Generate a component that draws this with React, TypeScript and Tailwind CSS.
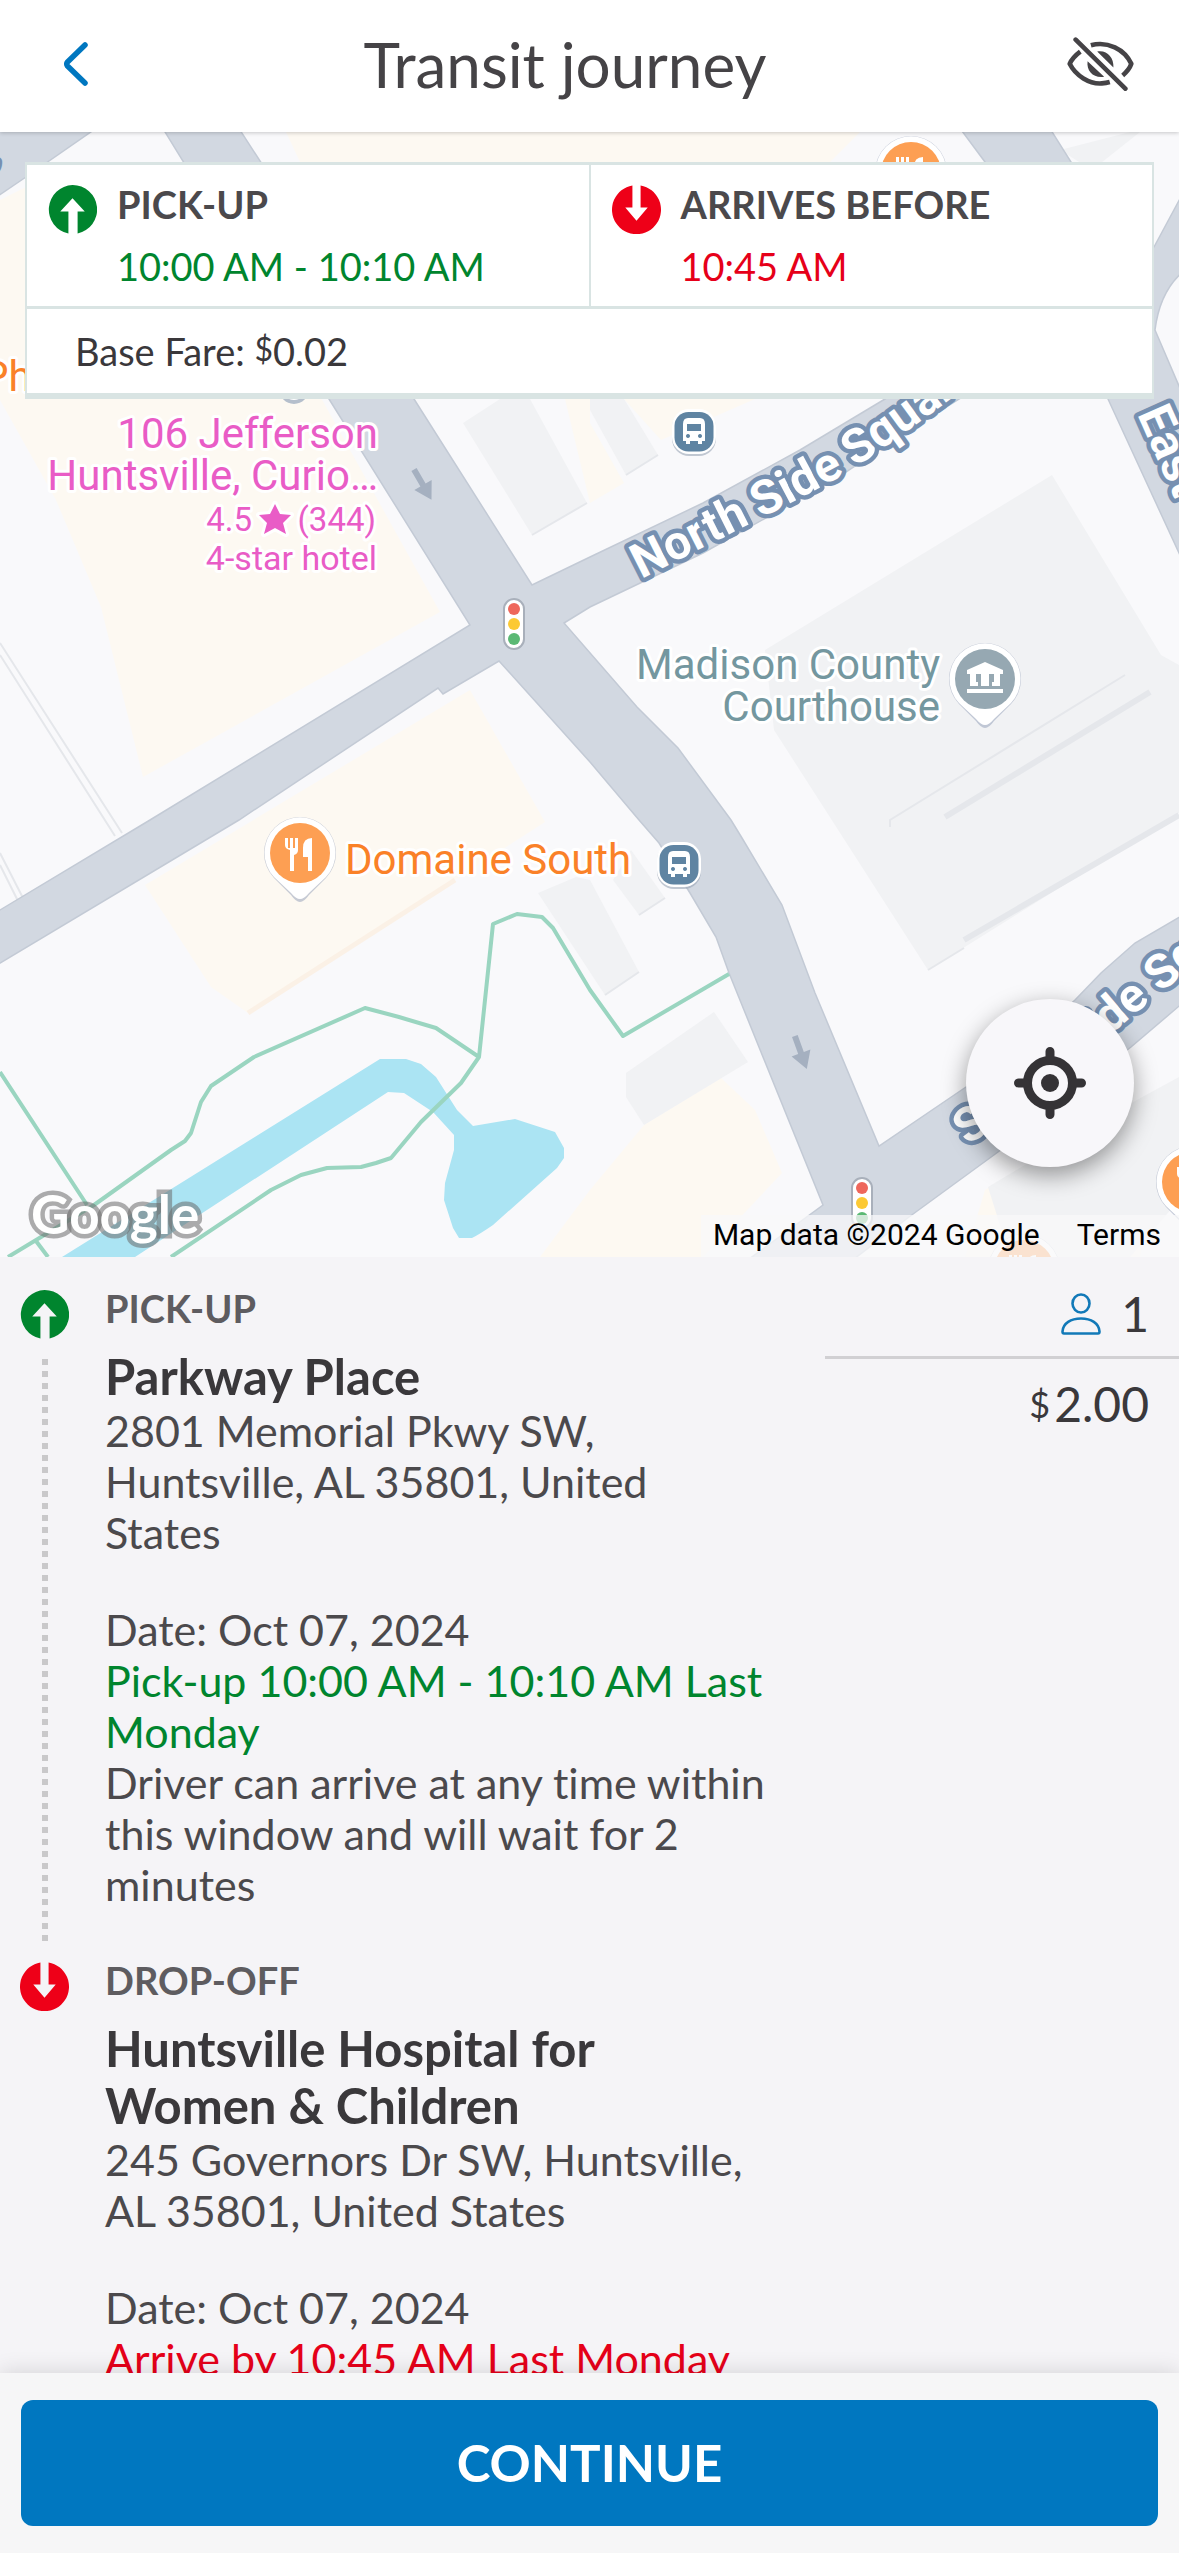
import type { ReactNode } from "react";

type Direction = "up" | "down";

function StopIcon({ direction }: { direction: Direction }) {
  return direction === "up" ? (
    <svg viewBox="0 0 48 48" className="size-[49px] shrink-0" aria-hidden="true">
      <path fill="#00852e" d="M24 0a24 24 0 0 1 5 47.5V26h7L24 13 12 26h8v21.5A24 24 0 0 1 24 0Z" />
    </svg>
  ) : (
    <svg viewBox="0 0 48 48" className="size-[49px] shrink-0" aria-hidden="true">
      <path fill="#ee0018" d="M28 .5a24 24 0 1 1-8 0V22h-7l11 13 11-13h-7Z" />
    </svg>
  );
}

function Bus({ x, y }: { x: number; y: number }) {
  return (
    <g transform={`translate(${x} ${y})`}>
      <rect x="-22" y="-22" width="44" height="46" rx="17" fill="#9aa5b5" opacity=".6" />
      <rect x="-22" y="-23" width="44" height="45" rx="17" fill="#fff" />
      <rect x="-19.500" y="-20" width="39" height="39.500" rx="14" fill="#5f84a2" />
      <path
        fill="#fff"
        fillRule="evenodd"
        d="M-6-14H6Q11-14 11-8V9H8v3H4V9H-4v3H-8V9H-11V-8Q-11-14-6-14ZM-7-8V-1H7V-8ZM-6 2a2 2 0 1 0 .01 0ZM6 2a2 2 0 1 0 .01 0Z"
      />
    </g>
  );
}

function Pin({ x, y, color, children }: { x: number; y: number; color: string; children?: ReactNode }) {
  return (
    <g transform={`translate(${x} ${y})`}>
      <path
        d="M0 49Q-4 49-9 42L-26 25A36 36 0 1 1 26 25L9 42Q4 49 0 49Z"
        fill="#8f9bb5"
        opacity=".5"
      />
      <path d="M0 46Q-4 46-9 40L-26 24A35.500 35.500 0 1 1 26 24L9 40Q4 46 0 46Z" fill="#fff" />
      <circle r="30" fill={color} />
      {children}
    </g>
  );
}

function Cutlery() {
  return (
    <path
      fill="#fff"
      d="M-15-15h3v10h2v-10h3v10h2v-10h3v12q0 4-4 5v16h-4V-3q-5-1-5-5ZM12-15v33H8V4H3V-5Q3-15 12-15Z"
    />
  );
}

function TrafficLight({ x, y }: { x: number; y: number }) {
  return (
    <g transform={`translate(${x} ${y})`}>
      <rect x="-10" y="-25" width="20" height="50" rx="10" fill="#fff" stroke="#a9b0bb" strokeWidth="2" />
      <circle cy="-15" r="6" fill="#ee675c" />
      <circle r="6" fill="#fcc934" />
      <circle cy="15" r="6" fill="#5bb974" />
    </g>
  );
}

function OneWayArrow({ x, y, angle }: { x: number; y: number; angle: number }) {
  return (
    <path
      transform={`translate(${x} ${y}) rotate(${angle})`}
      d="M-3-18H3V0H10L0 17-10 0H-3Z"
      fill="#a5b0c0"
    />
  );
}

function CityMap() {
  return (
    <svg
      viewBox="0 132 1179 1125"
      preserveAspectRatio="xMidYMid slice"
      className="block h-[1125px] w-full bg-[#f9f9fb]"
      role="img"
      aria-label="Map of downtown Huntsville"
    >
      {/* commercial blocks */}
      <g fill="#fdf9f2">
        <path d="M0 200 40 180H200L440 612 143 777 101 607 56 500 0 400Z" />
        <path d="M286 132H860L830 162H300Z" />
        <path d="M470 690 545 822 248 1013 211 987 145 885Z" />
        <path d="M721 1078 755 1110 782 1173 703 1257H540L590 1190 644 1125Z" />
        <path d="M590 423 624 483 590 503 565 399H590ZM624 399H755L661 440Z" />
        <path d="M1130 1100 1160 1160 1140 1257H965L985 1190Z" />
      </g>
      <path d="M248 1013 455 880" stroke="#fbf1e6" strokeWidth="5" />

      {/* buildings */}
      <g fill="#f1f2f4">
        <path d="M463 423 500 399H530L587 503 532 535Z" />
        <path d="M590 399H624L658 455 626 475 590 410Z" />
        <path d="M538 893 576 877 590 880 639 972 605 995Z" />
        <path d="M613 880 631 850 665 898 639 915Z" />
        <path d="M714 1012 748 1062 644 1125 626 1097V1073Z" />
        <path d="M765 650 1052 475 1161 655 1179 665V813L928 970 774 730Z" />
        <path d="M988 1187 1100 1120 1179 1077V1200L1130 1257H1010Z" />
        <path d="M1060 150 1130 132H1140L1092 170Z" />
      </g>
      <g fill="none" stroke="#e5e7eb">
        <path d="M945 817 1150 692M964 940 1179 815" strokeWidth="6" />
        <path d="M890 827V820L1125 675M532 535 587 503M626 475 658 455M605 995 639 972M639 915 665 898M928 970 964 948" strokeWidth="2" />
        <path d="M0 643 122 833M0 655 115 836M0 853 24 900M0 865 19 903" strokeWidth="2" />
      </g>

      {/* streets */}
      <g fill="#d2d8e1" stroke="#c3cad5" strokeWidth="1.500">
        <path d="M-5 127H98L26 177-5 198Z" />
        <path d="M1190 180 1154 247 1120 240 1049 127H959L985 162 1040 270Q960 350 885 399L800 450 703 503 590 557 532 585 414 399 238 127H162L329 399 470 625 150 820-5 913V966L239 820 438 688 443 694 499 661 590 762 639 820 659 843 690 893 716 937 729 973 823 1205 745 1262H850L909 1217 998 1152 1131 1047 1185 1001V914L1135 943 1101 973 1075 1000 1020 1050 966 1087 879 1146 815 993 782 905 742 838 731 820 678 748 637 707 564 623 590 607 703 553 834 480 909 430Q1000 375 1070 325L1108 399 1185 566V400L1155 330Q1160 290 1185 270Z" />
      </g>
      <OneWayArrow x={423} y={485} angle={-30} />
      <OneWayArrow x={801} y={1053} angle={-20} />

      {/* canal and pond */}
      <path
        fill="#abe4f3"
        d="M62 1257 380 1059H406L421 1064 436 1077 457 1110 473 1126 515 1119 555 1132 564 1148V1158L557 1168 493 1225Q480 1234 472 1238H459L453 1228 444 1200 445 1183 454 1150V1135L433 1112 404 1093 388 1092 135 1257Z"
      />
      {/* footpaths */}
      <path
        fill="none"
        stroke="#9ad5c0"
        strokeWidth="4"
        strokeLinejoin="round"
        d="M0 1072 87 1205M8 1257 94 1205 171 1150 185 1141 191 1133 201 1102 211 1086 254 1057 365 1008 399 1017 436 1028 479 1057 493 924 517 914 542 917 553 928 590 990 623 1036 729 974M479 1057 461 1083 421 1122 391 1158 376 1163 361 1167 327 1168 301 1175 271 1190 171 1257M36 1241 48 1257"
      />

      <TrafficLight x={514} y={624} />
      <TrafficLight x={862} y={1203} />
      <Bus x={694} y={432} />
      <Bus x={679} y={865} />
      <circle cx="294" cy="389" r="13" fill="#fff" stroke="#b5bfcc" strokeWidth="4" />

      <Pin x={300} y={853} color="#fd9f53"><Cutlery /></Pin>
      <Pin x={911} y={172} color="#fd9f53"><Cutlery /></Pin>
      <Pin x={1192} y={1182} color="#fd9f53"><Cutlery /></Pin>
      <Pin x={1024} y={1270} color="#fd9f53"><Cutlery /></Pin>
      <Pin x={985} y={679} color="#96a8b2">
        <path
          fill="#fff"
          fillRule="evenodd"
          d="M0-17 18-9V-5H15V7H-15V-5H-18V-9ZM-9-5V3H-7V7H-4V-5ZM4-5V7H7V3H9V-5ZM-18 10H18V14H-18Z"
        />
      </Pin>

      {/* street names */}
      <path id="north-side" d="M641 579 Q700 549 746 526 T845 474 Q905 436 1080 300" fill="none" />
      <path id="south-side" d="M968 1146 Q1060 1078 1116 1030 T1280 900" fill="none" />
      <g
        className="font-[Roboto,sans-serif] font-bold [paint-order:stroke]"
        fill="#fff"
        stroke="#7690b1"
        strokeWidth="9"
        strokeLinejoin="round"
        fontSize="48"
      >
        <text><textPath href="#north-side">North Side Square</textPath></text>
        <text><textPath href="#south-side">South Side Square</textPath></text>
        <text transform="translate(1137 414) rotate(66)">East Side Square</text>
        <text transform="translate(-14 205) rotate(-75)">St</text>
      </g>

      {/* place names */}
      <g
        className="font-[Roboto,sans-serif] [paint-order:stroke]"
        stroke="#fff"
        strokeWidth="6"
        strokeLinejoin="round"
        fontSize="42"
      >
        <g fill="#e95cc6" textAnchor="end">
          <text x="378" y="448">106 Jefferson</text>
          <text x="378" y="490">Huntsville, Curio…</text>
          <text x="252" y="531" fontSize="33">4.5</text>
          <path d="M275 504 280 514 291 515 283 523 286 534 275 528 264 534 267 523 259 515 270 514Z" />
          <text x="376" y="531" fontSize="33">(344)</text>
          <text x="377" y="570" fontSize="34">4-star hotel</text>
        </g>
        <g fill="#74979f" textAnchor="end">
          <text x="940" y="679">Madison County</text>
          <text x="940" y="721">Courthouse</text>
        </g>
        <text x="345" y="874" fill="#fa8128">Domaine South</text>
        <text x="-18" y="391" fill="#fa8128">Pho</text>
      </g>

      <text
        x="31"
        y="1234"
        className="font-[Lato,sans-serif] font-bold [paint-order:stroke]"
        fill="#fff"
        stroke="#6b6b6b"
        strokeOpacity=".55"
        strokeWidth="9"
        fontSize="53"
      >
        Google
      </text>
    </svg>
  );
}

function SummaryCell({ direction, label, time }: { direction: Direction; label: string; time: string }) {
  return (
    <div className="flex flex-1 gap-5 px-[21px] pt-4 pb-[17px]">
      <div className="pt-1">
        <StopIcon direction={direction} />
      </div>
      <div className="space-y-4 text-[38px] leading-[46px]">
        <h2 className="font-bold text-[#4b494c]">{label}</h2>
        <p className={direction === "up" ? "text-[#00852e]" : "text-[#e60019]"}>{time}</p>
      </div>
    </div>
  );
}

function Stop({
  direction,
  label,
  name,
  children,
  dotted,
}: {
  direction: Direction;
  label: string;
  name: string;
  children: ReactNode;
  dotted?: boolean;
}) {
  return (
    <li className="flex">
      <div className="flex w-[105px] shrink-0 flex-col pl-5">
        <div className="pt-2"><StopIcon direction={direction} /></div>
        {dotted && (
          <div className="mt-5 mb-3 ml-[22px] w-1.5 flex-1 bg-[repeating-linear-gradient(to_bottom,#c9c8ca_0px,#c9c8ca_6px,transparent_6px,transparent_12px)]" />
        )}
      </div>
      <div className="pb-11">
        <p className="text-[38px] leading-[52px] font-bold text-[#5e5c60]">{label}</p>
        <h3 className="mt-3.5 text-[49px] leading-[57px] font-bold text-[#3a383b]">{name}</h3>
        <div className="text-[43px] leading-[51px] text-[#4b494c]">{children}</div>
      </div>
    </li>
  );
}

export default function App() {
  return (
    <div className="flex h-screen flex-col overflow-hidden bg-[#f5f4f7] font-[Lato,sans-serif] [font-variant-ligatures:none]">
      <header className="relative z-10 flex h-[132px] shrink-0 items-center bg-white pb-1 shadow-[0_1px_4px_rgba(0,0,0,0.2)]">
        <button type="button" aria-label="Back" className="flex w-[100px] justify-end pr-3">
          <svg viewBox="0 0 25 44" className="h-11 w-[25px]" fill="none" stroke="#0077c0" strokeWidth="5.500" strokeLinecap="round" strokeLinejoin="round">
            <path d="M22 3 4.500 20Q3 22 4.500 24L22 41" />
          </svg>
        </button>
        <h1 className="flex-1 text-center text-[62px] leading-[74px] text-[#454346]">Transit journey</h1>
        <button type="button" aria-label="Hide map" className="flex w-[149px] pl-[37px]">
          <svg viewBox="0 0 202 163" className="h-[54px] w-[67px]" fill="none" stroke="#454346" strokeWidth="14" strokeLinecap="round" strokeLinejoin="round">
            <path strokeLinecap="butt" d="M40 44C24 56 13 69 8 81c18 36 60 62 97 59 8-.5 17-2 24-4M72 25c50-14 102 12 122 56-4 12-13 24-26 35" />
            <path fill="#454346" stroke="none" d="M91 44c28-6 51 17 49 48ZM62 73c-4 30 18 52 50 47Z" />
            <path d="M26 8 176 156" />
          </svg>
        </button>
      </header>

      <main className="min-h-0 flex-1 overflow-y-auto [scrollbar-width:none]">
        <section className="relative">
          <CityMap />
          <div className="absolute inset-x-[25px] top-[30px] border-2 border-t-3 border-b-6 border-[#d9e4e3] bg-white">
            <div className="flex divide-x-2 divide-[#d9e4e3] border-b-3 border-[#d9e4e3]">
              <SummaryCell direction="up" label="PICK-UP" time="10:00 AM - 10:10 AM" />
              <SummaryCell direction="down" label="ARRIVES BEFORE" time="10:45 AM" />
            </div>
            <p className="px-12 py-[19px] text-[38px] leading-[46px] text-[#3a383b]">
              Base Fare: <span className="align-[5px] text-[32px] leading-none">$</span>0.02
            </p>
          </div>
          <button
            type="button"
            aria-label="Center map"
            className="absolute right-[45px] bottom-[90px] flex size-[168px] items-center justify-center rounded-full bg-[#f8f7fa] shadow-[0_8px_24px_rgba(0,0,0,0.4)]"
          >
            <svg viewBox="-36 -36 72 72" className="size-[72px]" fill="none" stroke="#353336" strokeWidth="9" strokeLinecap="round">
              <circle r="22.500" />
              <circle r="9" fill="#353336" stroke="none" />
              <path d="M0-31.500V-25M0 25V31.500M-31.500 0H-25M25 0H31.500" />
            </svg>
          </button>
          <div className="absolute right-0 bottom-0 flex h-[42px] items-center gap-[37px] bg-[#f8f8f9]/75 pr-[18px] pb-1 pl-3 font-[Roboto,sans-serif] text-[30px] leading-[35px] text-black">
            <span>Map data ©2024 Google</span>
            <a href="#terms">Terms</a>
          </div>
        </section>

        <section className="flex pt-[25px]">
          <ol className="min-w-0 flex-1 pr-14">
            <Stop direction="up" label="PICK-UP" name="Parkway Place" dotted>
              <p>2801 Memorial Pkwy SW, Huntsville, AL 35801, United States</p>
              <p className="mt-[46px]">Date: Oct 07, 2024</p>
              <p className="text-[#00852e]">Pick-up 10:00 AM - 10:10 AM Last Monday</p>
              <p>Driver can arrive at any time within this window and will wait for 2 minutes</p>
            </Stop>
            <Stop direction="down" label="DROP-OFF" name="Huntsville Hospital for Women & Children">
              <p>245 Governors Dr SW, Huntsville, AL 35801, United States</p>
              <p className="mt-[46px]">Date: Oct 07, 2024</p>
              <p className="text-[#e60019]">Arrive by 10:45 AM Last Monday</p>
            </Stop>
          </ol>
          <aside className="w-[30%] shrink-0 text-right text-[48px] leading-[58px] text-[#3a383b]">
            <div className="flex items-center justify-end gap-5 border-b-3 border-[#d1d0d3] pt-[3px] pr-[30px] pb-[13px]">
              <svg viewBox="0 0 40 42" className="h-[42px] w-10" fill="none" stroke="#1279b8" strokeWidth="2.600" strokeLinejoin="round" role="img" aria-label="Passengers">
                <ellipse cx="20" cy="10.500" rx="8.500" ry="9" />
                <path d="M1.500 38.500C2 30 10 25.500 20 25.500S38 30 38.500 38.500Q38.500 40.500 37 40.500H3Q1.500 40.500 1.500 38.500Z" />
              </svg>
              <span>1</span>
            </div>
            <p className="pt-4 pr-[30px]">
              <span className="mr-1 align-[4px] text-[36px] leading-none">$</span>2.00
            </p>
          </aside>
        </section>
      </main>

      <footer className="relative z-10 shrink-0 bg-[#f6f6f7] px-[21px] py-[27px] shadow-[0_-2px_20px_rgba(0,0,0,0.12)]">
        <button type="button" className="h-[126px] w-full rounded-xl bg-[#0077c0] text-[51px] font-bold text-white">
          CONTINUE
        </button>
      </footer>
    </div>
  );
}
